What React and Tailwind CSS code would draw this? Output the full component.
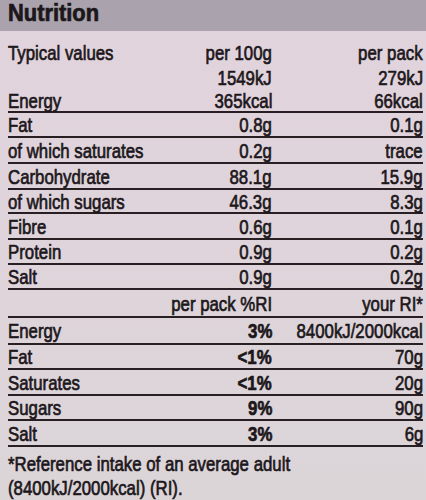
import React from 'react';

const font = { fontFamily: '"Liberation Sans", Arial, sans-serif' };

const topRows = [
  ['Fat', '0.8g', '0.1g', 'h-[25px]'],
  ['of which saturates', '0.2g', 'trace', 'h-[26px]'],
  ['Carbohydrate', '88.1g', '15.9g', 'h-[26px]'],
  ['of which sugars', '46.3g', '8.3g', 'h-[24px]'],
  ['Fibre', '0.6g', '0.1g', 'h-[26px]'],
  ['Protein', '0.9g', '0.2g', 'h-[25px]'],
  ['Salt', '0.9g', '0.2g', 'h-[25px]'],
];

const riRows = [
  ['Energy', '3%', '8400kJ/2000kcal', 'h-[27px]'],
  ['Fat', '<1%', '70g', 'h-[25px]'],
  ['Saturates', '<1%', '20g', 'h-[26px]'],
  ['Sugars', '9%', '90g', 'h-[25px]'],
  ['Salt', '3%', '6g', 'h-[26px]'],
];

// condensed print face: squeeze the glyphs horizontally
const L = ({ children, bold }) => (
  <span className={`inline-block whitespace-nowrap origin-left scale-x-[0.8] ${bold ? 'font-bold' : ''}`}>{children}</span>
);
const R = ({ children, bold }) => (
  <span className={`shrink-0 whitespace-nowrap origin-right scale-x-[0.8] ${bold ? 'font-bold' : ''}`}>{children}</span>
);

const Row = ({ label, a, b, h, line = true, boldA = false }) => (
  <div className={`grid grid-cols-[minmax(0,1fr)_110px_151px] items-center ${h} ${line ? 'border-b-[2.5px] border-[#281f23]' : ''}`}>
    <div className="min-w-0"><L>{label}</L></div>
    <div className="flex justify-end"><R bold={boldA}>{a}</R></div>
    <div className="flex justify-end"><R>{b}</R></div>
  </div>
);

export default function App() {
  return (
    <div
      className="w-[426px] h-[500px] overflow-hidden bg-gradient-to-b from-[#e2d3dd] to-[#dbd5d8] text-[#1c171b] [-webkit-text-stroke:0.7px_#1c171b]"
      style={font}
    >
      {/* header band */}
      <div className="h-[31px] bg-[#aaa3ad] px-2 text-[23px] font-bold leading-[27px]">
        <span className="inline-block origin-left scale-x-[0.95]">Nutrition</span>
      </div>

      <div className="pl-2 pr-[3px] pt-[9px] text-[21px] leading-none">
        <Row label="Typical values" a="per 100g" b="per pack" h="h-[25px]" line={false} />
        <Row label="" a="1549kJ" b="279kJ" h="h-[24px]" line={false} />
        <Row label="Energy" a="365kcal" b="66kcal" h="h-[24px]" />
        {topRows.map(([l, a, b, h]) => (
          <Row key={l + a} label={l} a={a} b={b} h={h} />
        ))}
        <div className="grid grid-cols-[minmax(0,1fr)_151px] items-center h-[28px] border-b-[2.5px] border-[#281f23]">
          <div className="flex justify-end"><R>per pack %RI</R></div>
          <div className="flex justify-end"><R>your RI*</R></div>
        </div>
        {riRows.map(([l, a, b, h]) => (
          <Row key={l + b} label={l} a={a} b={b} h={h} boldA />
        ))}
        <div className="pt-[5px] leading-[24px]">
          <div><L>*Reference intake of an average adult</L></div>
          <div><L>(8400kJ/2000kcal) (RI).</L></div>
        </div>
      </div>
    </div>
  );
}
